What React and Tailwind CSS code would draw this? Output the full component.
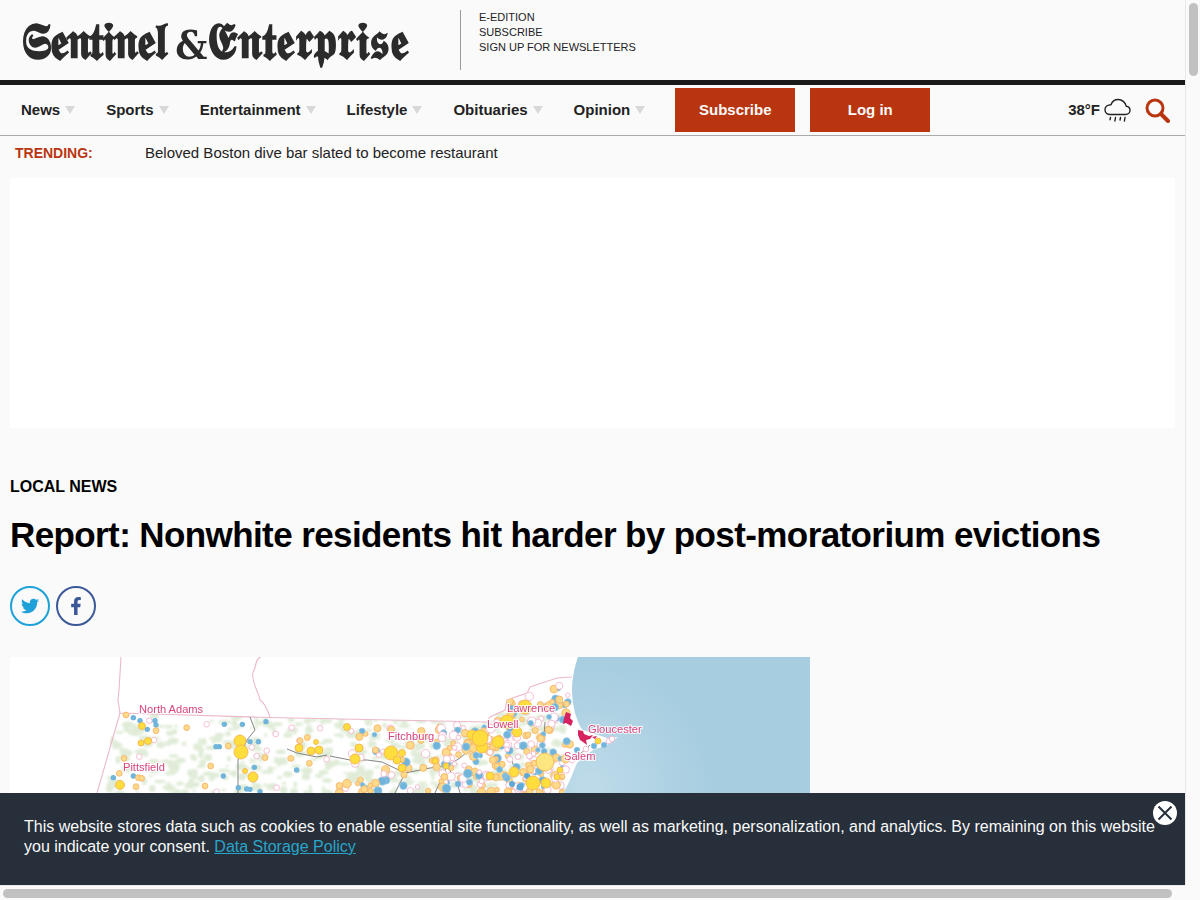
import React from "react";
import { FaTwitter, FaFacebookF } from "react-icons/fa";

function Caret() {
  return <span className="ml-[5px] inline-block h-0 w-0 border-x-[5px] border-t-[8px] border-x-transparent border-t-[#d8d8d8]" />;
}

function NavItem({ label }) {
  return (
    <a className="flex items-center text-[15px] font-bold text-[#222]">
      {label}
      <Caret />
    </a>
  );
}

function Rain() {
  return (
    <svg width="27" height="25" viewBox="0 0 27 25" fill="none" stroke="#222" strokeWidth="1.4" strokeLinecap="round" strokeLinejoin="round" className="block">
      <path d="M6 16.5h15.5c2.6 0 4.5-1.9 4.5-4.2 0-2.3-1.7-3.9-3.8-4.1C21.4 4.2 18 1.5 14.3 1.5 10.8 1.5 8 3.5 7 6.7 3.6 6.7 1 8.8 1 11.7 1 14.5 3.2 16.5 6 16.5Z" />
      <path d="M6.5 19.5l-.5 2.2M11.5 19.5l-.6 3.5M16.5 19.5l-.5 2.5M21 19.5l-.6 3.5" />
    </svg>
  );
}

function Search() {
  return (
    <svg width="25" height="25" viewBox="0 0 25 25" fill="none" stroke="#b83510" className="block">
      <circle cx="10" cy="10" r="8" strokeWidth="3" />
      <path d="M16 16l7 7" strokeWidth="4" strokeLinecap="round" />
    </svg>
  );
}

function rng(seed) {
  let s = seed;
  return () => {
    s = (s * 16807) % 2147483647;
    return s / 2147483647;
  };
}

const z8 = ([x, y]) => [90 + x / 3, 690 + y / 3];
const westRing = [[350,103],[557,132],[605,113],[690,115],[530,182],[485,172],[500,198],[710,208],[148,200],[192,150],[178,92],[380,305],[560,293],[628,152]].map(z8);
const westBlue = [[130,83],[150,92],[172,118],[198,105],[195,92],[403,103],[457,103],[528,95],[378,170],[388,170],[505,155],[480,155],[493,232],[400,258],[620,240],[70,263],[130,258],[470,297],[480,298],[445,293],[510,305]].map(z8);
const westOrange = [[108,75],[198,122],[290,113],[415,168],[525,203],[602,205],[652,143],[658,220],[102,205],[362,228],[345,288],[138,290],[145,263],[155,265],[88,250],[630,152]].map(z8);

const big = [
  [240, 741, 6], [241, 752, 7], [253, 777, 5], [142, 726, 3.5], [148, 741, 3.5], [141, 743, 3], [120, 785, 4.5], [299, 748, 4], [311, 751, 4], [319, 750, 4],
  [316, 742, 2.5], [245, 771, 2.5], [355, 759, 5], [359, 748, 4], [347, 727, 3.5], [391, 753, 7], [402, 753, 3.5], [397, 760, 4], [402, 768, 4],
  [472, 735, 5], [482, 747, 6], [480, 738, 8], [498, 742, 6], [517, 732, 5], [507, 722, 7], [525, 707, 7], [533, 783, 7], [546, 783, 5], [514, 772, 5],
  [557, 777, 3], [560, 770, 3], [446, 766, 3], [435, 761, 3], [490, 776, 4], [598, 741, 3],
];

const dots = [];
const r = rng(12345);
for (let i = 0; i < 430; i++) {
  const mid = r() < 0.17;
  const x = mid ? 330 + r() * 105 : 435 + r() * 135;
  const y = 678 + r() * 115;
  const north = x < 487 ? 721 : x < 505 ? 716 : x < 527 ? 698 : 682;
  if (y < north + 3) continue;
  const k = r();
  const rad = 2.2 + r() * 2.2;
  const t = k < 0.36 ? 0 : k < 0.56 ? 1 : 2;
  dots.push([x, y, rad, t]);
}
const kinds = [
  ["#ffffff", "#f3b7cf"],
  ["#6fb4dc", "#93c6e4"],
  ["#fed98a", "#f5b56a"],
];

const greens = [];
const g = rng(777);
for (let i = 0; i < 520; i++) {
  greens.push([105 + g() * 460, 705 + g() * 90, 1.5 + g() * 5, 1 + g() * 3]);
}

const cape = [[604, 745, 1], [609, 741, 0], [594, 746, 1], [586, 749, 0], [577, 750, 1], [572, 760, 0], [612, 739, 0]];

function MapArt() {
  return (
    <svg width="800" height="240" viewBox="10 657 800 240" className="block">
      <defs>
        <radialGradient id="sea" gradientUnits="userSpaceOnUse" cx="590" cy="785" r="125">
          <stop offset="0" stopColor="#bedbe9" />
          <stop offset="1" stopColor="#a6cde0" />
        </radialGradient>
        <filter id="soft"><feGaussianBlur stdDeviation="0.45" /></filter>
        <filter id="softer"><feGaussianBlur stdDeviation="1" /></filter>
        <clipPath id="landclip">
          <path d="M120 713L270 717.5L487 722L490 717L505 710L507 700L527 693L530 687L557 678L572 677L572 690L575 713L583 730L607 738L617 738L607 745L593 750L577 763L570 780L560 800L60 900L90 793Z" />
        </clipPath>
      </defs>
      <rect x="10" y="657" width="800" height="240" fill="#fff" />
      <path d="M578 657C574 668 572 680 572 690C572 700 574 708 575 713C578 722 580 728 583 730L607 738L618 737L607 745L593 750L577 763L570 780L560 800L560 897L810 897L810 657Z" fill="url(#sea)" />
      <g clipPath="url(#landclip)" filter="url(#softer)">
        {greens.map(([x, y, a, b], i) => (
          <ellipse key={i} cx={x} cy={y} rx={a} ry={b} fill="#e0ecd8" />
        ))}
      </g>
      <g filter="url(#soft)">
        <g fill="none" stroke="#ecb9cb" strokeWidth="1.1">
          <path d="M121 657L119 690L118 700L120 713L270 717.5L487 722" />
          <path d="M261 657C254 659 257 668 253 672C251 682 258 690 260 700C266 704 268 712 270 717" />
          <path d="M120 713L97 793" />
          <path d="M487 722L490 717L505 710L507 700L527 693L530 687L557 678L572 677" />
        </g>
        <g fill="none" stroke="#777" strokeWidth="0.9">
          <path d="M250 717L255 730L247 740L238 760L238 793" />
          <path d="M287 749L297 753L317 757L327 755" />
          <path d="M330 756L350 760L367 760L382 762L405 773L430 768L447 766L460 758L473 747" />
          <path d="M405 773L395 793M447 766L435 793M447 766L457 782L460 793M545 722L543 750M507 750L517 773M590 745L577 757" />
        </g>
        {westRing.map(([x, y], i) => (
          <circle key={i} cx={x} cy={y} r="2.8" fill="#fff" stroke="#f3b7cf" strokeWidth="0.9" />
        ))}
        {westBlue.map(([x, y], i) => (
          <circle key={i} cx={x} cy={y} r="2.7" fill="#6fb4dc" />
        ))}
        {westOrange.map(([x, y], i) => (
          <circle key={i} cx={x} cy={y} r="2.9" fill="#fed98a" stroke="#f5b56a" strokeWidth="0.9" />
        ))}
        <g clipPath="url(#landclip)">
          {dots.map(([x, y, rad, t], i) => (
            <circle key={i} cx={x} cy={y} r={rad} fill={kinds[t][0]} stroke={kinds[t][1]} strokeWidth="0.9" />
          ))}
          <circle cx="520" cy="787" r="3.5" fill="#5fa9d8" />
          <circle cx="527" cy="776" r="3" fill="#5fa9d8" />
          <circle cx="512" cy="784" r="3" fill="#5fa9d8" />
          <circle cx="505" cy="776" r="3" fill="#7fbce0" />
        </g>
        {cape.map(([x, y, t], i) => (
          <circle key={i} cx={x} cy={y} r="2.8" fill={kinds[t][0]} stroke={kinds[t][1]} strokeWidth="0.9" />
        ))}
        <circle cx="545" cy="762" r="9" fill="#fde680" stroke="#f3b552" strokeWidth="0.9" />
        {big.map(([x, y, rad], i) => (
          <circle key={i} cx={x} cy={y} r={rad} fill="#ffdd3c" stroke="#f3b552" strokeWidth="0.9" />
        ))}
        <path d="M566 712l5 2l-1 4l3 3l-2 5l-5-3l-3 1l1-6ZM578 730l5 1l1 3l5 2l4-1l-3 4l-4 1l1 5l-4-3l-3-2l-2-5ZM592 737l5-1l-2 3Z" fill="#d6225f" />
        <g fontFamily="'Liberation Sans', sans-serif" fontSize="11.1" fill="#d9447f" stroke="#ffffff" strokeWidth="2" paintOrder="stroke" strokeOpacity="0.85">
          <text x="139" y="713">North Adams</text>
          <text x="388" y="740">Fitchburg</text>
          <text x="123" y="771">Pittsfield</text>
          <text x="507" y="712">Lawrence</text>
          <text x="487" y="728">Lowell</text>
          <text x="588" y="733">Gloucester</text>
          <text x="564" y="760">Salem</text>
        </g>
      </g>
    </svg>
  );
}

export default function App() {
  return (
    <div className="grid h-[900px] w-[1200px] grid-cols-[1185px_15px] grid-rows-[885px_15px] overflow-hidden bg-[#fafafa] font-['Liberation_Sans',Arial,sans-serif] text-[#222]">
      <div className="relative overflow-hidden">
        <header className="flex h-[80px] items-start">
          <div className="mt-[13px] ml-[21px] h-[57px] w-[391px] origin-left scale-x-[0.89] font-['DejaVu_Serif','Liberation_Serif',serif] text-[52px] leading-[55px] font-bold whitespace-nowrap text-[#2b2b2b]">
            <span className="tracking-[-1.7px]">𝕾𝖊𝖓𝖙𝖎𝖓𝖊𝖑</span>
            <span className="ml-[11px] text-[40px]">&amp;</span>
            <span>𝕰𝖓𝖙𝖊𝖗𝖕𝖗𝖎𝖘𝖊</span>
          </div>
          <div className="mt-[10px] ml-[48px] h-[60px] w-px bg-[#9a9a9a]" />
          <div className="mt-[10px] ml-[18px] flex flex-col text-[11px] leading-[15px] text-[#222]">
            <a>E-EDITION</a>
            <a>SUBSCRIBE</a>
            <a>SIGN UP FOR NEWSLETTERS</a>
          </div>
        </header>
        <div className="h-[5px] bg-[#1a1a1a]" />
        <nav className="flex h-[51px] items-center border-b border-[#aaa]">
          <div className="ml-[21px] flex gap-[31px]">
            {["News", "Sports", "Entertainment", "Lifestyle", "Obituaries", "Opinion"].map((n) => (
              <NavItem key={n} label={n} />
            ))}
          </div>
          <a className="ml-[30px] flex h-[44px] w-[120px] items-center justify-center bg-[#b83510] text-[15px] font-bold text-[#fafafa]">Subscribe</a>
          <a className="ml-[15px] flex h-[44px] w-[120px] items-center justify-center bg-[#b83510] text-[15px] font-bold text-[#fafafa]">Log in</a>
          <div className="ml-auto flex items-center">
            <span className="text-[15px] font-bold">38°F</span>
            <span className="ml-[4px]"><Rain /></span>
            <span className="mr-[15px] ml-[14px]"><Search /></span>
          </div>
        </nav>
        <div className="flex h-[42px] items-center pb-[7px] text-[14px]">
          <span className="ml-[15px] w-[130px] font-bold text-[#b83510]">TRENDING:</span>
          <span className="text-[15px]">Beloved Boston dive bar slated to become restaurant</span>
        </div>
        <div className="mx-[10px] h-[250px] bg-white" />
        <main className="px-[10px]">
          <div className="mt-[49px] text-[16px] leading-[20px] font-bold text-black">LOCAL NEWS</div>
          <h1 className="mt-[16px] text-[35px] leading-[44px] font-bold tracking-[-0.6px] whitespace-nowrap text-black">
            Report: Nonwhite residents hit harder by post-moratorium evictions
          </h1>
          <div className="mt-[29px] flex gap-[6px]">
            <a className="flex h-[40px] w-[40px] items-center justify-center rounded-full border-2 border-[#1da1d8] text-[18px] text-[#1da1d8]"><FaTwitter /></a>
            <a className="flex h-[40px] w-[40px] items-center justify-center rounded-full border-2 border-[#3b5998] text-[18px] text-[#3b5998]"><FaFacebookF /></a>
          </div>
          <div className="mt-[31px]"><MapArt /></div>
        </main>
        <div className="absolute inset-x-0 bottom-0 h-[92px] bg-[#262f3a] pt-[24px] pl-[24px] text-[16px] leading-[20px] text-[#fafafa]">
          This website stores data such as cookies to enable essential site functionality, as well as marketing, personalization, and analytics. By remaining on this website
          <br />
          you indicate your consent. <a className="text-[#2aa5c9] underline">Data Storage Policy</a>
          <button className="absolute top-[8px] right-[8px] flex h-[24px] w-[24px] items-center justify-center rounded-full bg-white">
            <svg width="24" height="24" viewBox="0 0 24 24" stroke="#262f3a" strokeWidth="2"><path d="M5.5 5.5l13 13M18.5 5.5l-13 13" /></svg>
          </button>
        </div>
      </div>
      <div className="border-l border-[#e8e8e8] bg-[#fafafa] pt-[3px] pl-[3px]">
        <div className="h-[73px] w-[9px] rounded-full bg-[#c1c1c1]" />
      </div>
      <div className="border-t border-[#e8e8e8] bg-[#fafafa] pt-[3px] pl-[3px]">
        <div className="h-[9px] w-[1169px] rounded-full bg-[#c1c1c1]" />
      </div>
      <div className="bg-[#fafafa]" />
    </div>
  );
}
